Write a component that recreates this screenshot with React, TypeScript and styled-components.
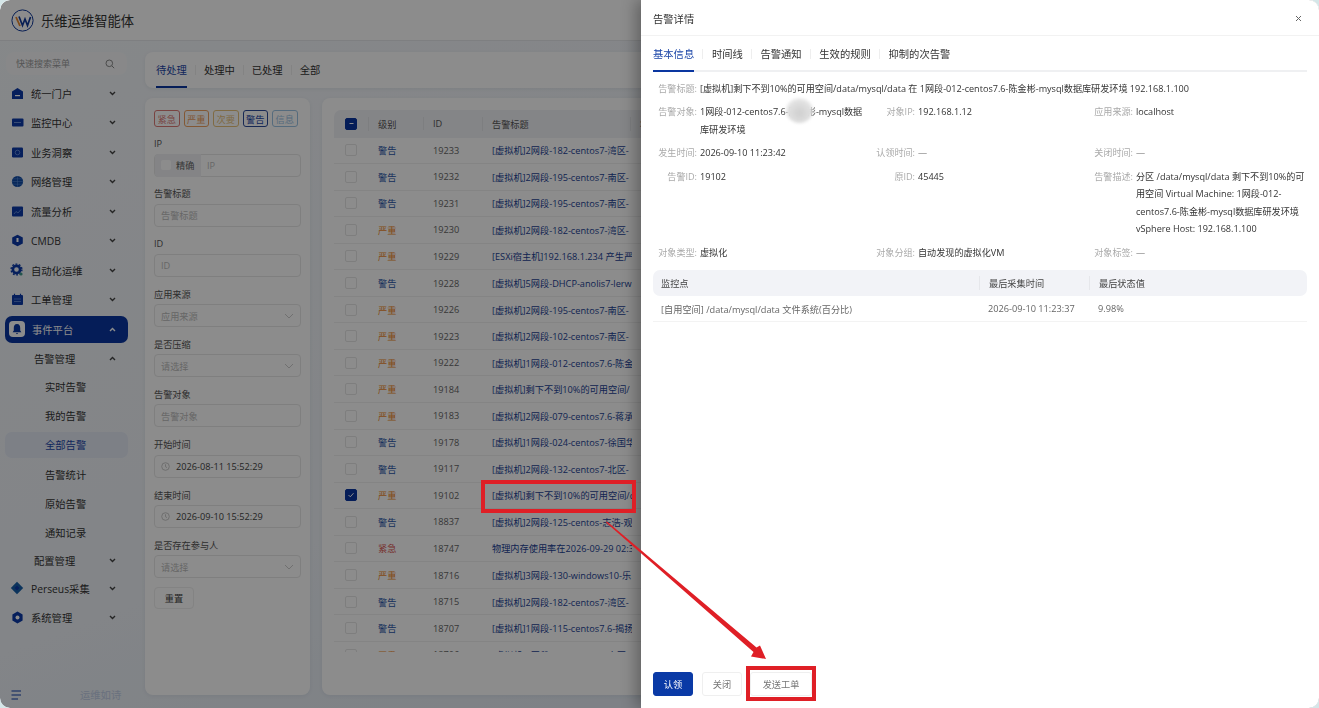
import React from 'react';
import styled, { createGlobalStyle } from 'styled-components';

const GlobalStyle = createGlobalStyle`
  html, body { margin: 0; padding: 0; background: #d5e6e8; overflow: hidden; }
  * { box-sizing: border-box; }
`;

const font = `"Open Sans", "Noto Sans CJK SC", sans-serif`;

const Screen = styled.div`
  position: relative;
  width: 1319px;
  height: 708px;
  overflow: hidden;
  border-radius: 10px;
  font-family: ${font};
  font-size: 10.3px;
  color: #333;
  background: linear-gradient(160deg, #f4f7fa 0%, #eef2f7 55%, #dde6f2 100%);
`;

const Page = styled.div`
  width: 1319px;
  height: 708px;
  display: flex;
  flex-direction: column;
`;

const TopBar = styled.header`
  height: 41px;
  flex: none;
  display: flex;
  align-items: center;
  gap: 7px;
  padding-left: 11px;
  background: #fff;
  border-bottom: 1px solid #e6e8ec;
  font-size: 13.3px;
  color: #333;
`;

const Body = styled.div`
  flex: 1;
  display: flex;
  min-height: 0;
`;

const Sidebar = styled.aside`
  width: 145px;
  flex: none;
  display: flex;
  flex-direction: column;
  padding: 11px 17px 0 5px;
  position: relative;
`;

const MenuSearch = styled.div`
  height: 23px;
  margin: 0 1px 3.5px;
  padding: 0 12px 0 10px;
  display: flex;
  align-items: center;
  justify-content: space-between;
  border-radius: 8px;
  background: #f7f8fa;
  color: #9a9a9a;
  font-size: 9px;
`;

const MenuItem = styled.div<{ $active?: boolean; $level?: number; $selected?: boolean }>`
  height: ${p => (p.$active ? '27px' : p.$selected ? '26px' : p.$level === 1 ? '26px' : p.$level === 2 ? '29.3px' : '29.5px')};
  margin: ${p => (p.$active ? '1px 0 3px' : p.$selected ? '1.65px 0' : '0')};
  flex: none;
  display: flex;
  align-items: center;
  padding-left: ${p => (p.$level === 2 ? '40px' : p.$level === 1 ? '29px' : '5px')};
  padding-right: 12.5px;
  gap: 7px;
  border-radius: 7px;
  font-size: 10.3px;
  color: ${p => (p.$active ? '#fff' : p.$selected ? '#1c46a8' : '#333')};
  background: ${p => (p.$active ? '#0a36a0' : p.$selected ? '#e3e9f5' : 'transparent')};
`;

const MenuLabel = styled.span`
  flex: 1;
  white-space: nowrap;
`;

const MenuIcon = styled.span<{ $active?: boolean }>`
  width: 14px;
  height: 14px;
  flex: none;
  display: flex;
  align-items: center;
  justify-content: center;
  ${p => p.$active && `
    width: 16px;
    height: 16px;
    margin-left: -1px;
    background: #fff;
    border-radius: 4px;
  `}
`;

const SideFoot = styled.div`
  position: absolute;
  left: 11px;
  right: 17px;
  bottom: 6px;
  display: flex;
  align-items: center;
  gap: 58px;
  color: #c0cde6;
  font-size: 10.3px;
`;

const Main = styled.main`
  flex: 1;
  min-width: 0;
  display: flex;
  flex-direction: column;
  padding-top: 11px;
`;

const PageTabs = styled.nav`
  height: 36px;
  flex: none;
  display: flex;
  align-items: stretch;
  padding-left: 11px;
  background: #fff;
  border-radius: 8px 0 0 8px;
  box-shadow: 0 1px 4px rgba(30, 50, 90, 0.07);
`;

const PageTab = styled.div<{ $on?: boolean }>`
  position: relative;
  display: flex;
  align-items: center;
  margin-right: 17px;
  font-size: 10.3px;
  color: ${p => (p.$on ? '#1c46a8' : '#333')};
  border-bottom: 2px solid ${p => (p.$on ? '#0a36a0' : 'transparent')};
  &:not(:last-child)::after {
    content: '';
    position: absolute;
    right: -9px;
    top: 13px;
    height: 10px;
    width: 1px;
    background: #eee;
  }
`;

const Columns = styled.div`
  flex: 1;
  display: flex;
  gap: 12px;
  padding: 10px 0 13px;
  min-height: 0;
`;

const FilterPanel = styled.section`
  width: 165px;
  flex: none;
  padding: 12px 9px;
  background: #fff;
  border-radius: 8px;
  box-shadow: 0 1px 4px rgba(30, 50, 90, 0.07);
`;

const LevelRow = styled.div`
  display: flex;
  gap: 4px;
  margin-bottom: 8px;
`;

const LevelChip = styled.span<{ $color: string; $on?: boolean }>`
  height: 17px;
  width: 25.5px;
  display: flex;
  align-items: center;
  justify-content: center;
  border: 1px solid ${p => p.$color};
  border-radius: 3px;
  font-size: 9.2px;
  color: ${p => (p.$on ? '#1c46a8' : p.$color)};
`;

const FieldLabel = styled.div`
  height: 16.5px;
  margin-top: 1px;
  display: flex;
  align-items: center;
  font-size: 9.2px;
  color: #555;
`;

const FieldBox = styled.div`
  height: 23px;
  margin: 2px 0 8.7px;
  display: flex;
  align-items: center;
  justify-content: space-between;
  padding: 0 6px;
  border: 1px solid #e8e8e8;
  border-radius: 4px;
  background: #fff;
  color: #bbb;
  font-size: 9.2px;
`;

const Addon = styled.div`
  margin: -1px 6px -1px -6px;
  width: 46px;
  height: 23px;
  flex: none;
  display: flex;
  align-items: center;
  gap: 5px;
  padding-left: 6px;
  background: #f0f1f4;
  border-radius: 4px 0 0 4px;
  color: #666;
`;

const AddonCheck = styled.span`
  width: 10px;
  height: 10px;
  background: #fff;
  border-radius: 2px;
`;

const FieldValue = styled.span`
  flex: 1;
  white-space: nowrap;
`;

const TimeValue = styled.span`
  flex: 1;
  margin-left: 6px;
  white-space: nowrap;
  color: #444;
`;

const ResetButton = styled.div`
  width: 40px;
  height: 22px;
  margin-top: 1px;
  display: flex;
  align-items: center;
  justify-content: center;
  border: 1px solid #eee;
  border-radius: 4px;
  color: #444;
  font-size: 9.2px;
`;

const TablePanel = styled.section`
  flex: 1;
  min-width: 0;
  padding: 12px 12px 40px;
  background: #fff;
  border-radius: 8px 0 0 8px;
  box-shadow: 0 1px 4px rgba(30, 50, 90, 0.07);
`;

const TableClip = styled.div`
  height: 542px;
  overflow: hidden;
`;

const HeadRow = styled.div`
  height: 27.5px;
  display: grid;
  grid-template-columns: 34px 55px 59px 148px 1fr;
  align-items: center;
  background: #f1f2f6;
  border-radius: 7px 7px 0 0;
  color: #555;
  font-size: 9.2px;
`;

const HeadCell = styled.div`
  padding-left: 9px;
  border-left: 1px solid #e4e5ea;
  white-space: nowrap;
  &:first-child { border-left: none; padding-left: 11px; }
`;

const DataRow = styled.div`
  height: 26.55px;
  display: grid;
  grid-template-columns: 34px 55px 59px 150px 1fr;
  align-items: center;
  border-bottom: 1px solid #f1f1f1;
  font-size: 9.2px;
`;

const CheckCell = styled.div`
  padding-left: 11px;
  display: flex;
`;

const Check = styled.span<{ $on?: boolean }>`
  width: 12px;
  height: 12px;
  display: flex;
  align-items: center;
  justify-content: center;
  border-radius: 2px;
  border: 1px solid ${p => (p.$on ? '#0a36a0' : '#e6e6e6')};
  background: ${p => (p.$on ? '#0a36a0' : '#fff')};
`;

const Level = styled.div<{ $color: string }>`
  padding-left: 10px;
  color: ${p => p.$color};
  white-space: nowrap;
`;

const IdCell = styled.div`
  padding-left: 10px;
  color: #666;
`;

const TitleCell = styled.div`
  padding-left: 10px;
  color: #1c3f94;
  white-space: nowrap;
  overflow: hidden;
`;

const Mask = styled.div`
  position: absolute;
  inset: 0;
  background: rgba(0, 0, 0, 0.45);
  backdrop-filter: blur(0.6px);
`;

const Drawer = styled.aside`
  position: absolute;
  top: 0;
  right: 0;
  bottom: 0;
  width: 678px;
  display: flex;
  flex-direction: column;
  background: #fff;
  box-shadow: -5px 0 14px rgba(0, 0, 0, 0.3);
`;

const DrawerHead = styled.div`
  height: 36px;
  flex: none;
  display: flex;
  align-items: center;
  justify-content: space-between;
  padding: 2px 17px 0 12px;
  border-bottom: 1px solid #f2f2f2;
  font-size: 10.3px;
  color: #333;
`;

const DrawerBody = styled.div`
  flex: 1;
  min-height: 0;
  padding: 0 12px;
`;

const DrawerTabs = styled.div`
  height: 36px;
  display: flex;
  align-items: stretch;
  border-bottom: 2px solid #eff0f2;
`;

const DrawerTab = styled.div<{ $on?: boolean }>`
  position: relative;
  display: flex;
  align-items: center;
  margin-right: 17.7px;
  color: ${p => (p.$on ? '#1c46a8' : '#333')};
  font-size: 10.3px;
  &:not(:last-child)::before {
    content: '';
    position: absolute;
    right: -9px;
    top: 13px;
    height: 10px;
    width: 1px;
    background: #eee;
  }
  ${p => p.$on && `
    &::after {
      content: '';
      position: absolute;
      left: 0;
      right: 0;
      bottom: -2px;
      height: 2px;
      background: #0a36a0;
    }
  `}
`;

const InfoGrid = styled.div`
  display: grid;
  grid-template-columns: repeat(3, 218px);
  row-gap: 6px;
  padding-top: 7.5px;
`;

const InfoItem = styled.div<{ $wide?: boolean }>`
  display: flex;
  line-height: 17.5px;
  ${p => p.$wide && 'grid-column: 1 / -1;'}
`;

const InfoLabel = styled.span`
  width: 44px;
  flex: none;
  margin-right: 3px;
  text-align: right;
  white-space: nowrap;
  color: #aaa;
  font-size: 9.1px;
`;

const InfoValue = styled.span`
  width: 170px;
  color: #333;
  font-size: 9.1px;
`;

const WideValue = styled(InfoValue)`
  width: auto;
  flex: 1;
  white-space: nowrap;
`;

const MuteValue = styled(InfoValue)`
  color: #888;
`;

const Smudge = styled.span`
  position: absolute;
  left: 786px;
  top: 98px;
  width: 27px;
  height: 25px;
  border-radius: 50%;
  background: radial-gradient(circle at 50% 60%, #cfcfcf 0%, #e0e0e0 55%, rgba(255, 255, 255, 0.6) 100%);
  filter: blur(1.5px);
`;

const PointHead = styled.div`
  height: 26px;
  margin-top: 8.5px;
  display: grid;
  grid-template-columns: 326px 110px 1fr;
  align-items: center;
  background: #f2f3f7;
  border-radius: 7px;
  color: #444;
  font-size: 9.2px;
`;

const PointCell = styled.div`
  padding-left: 9px;
  border-left: 1px solid #e6e7eb;
  &:first-child { border-left: none; padding-left: 8px; }
`;

const PointRow = styled.div`
  height: 26px;
  padding-top: 1px;
  display: grid;
  grid-template-columns: 326px 110px 1fr;
  align-items: center;
  border-bottom: 1px solid #f3f3f3;
  color: #666;
  font-size: 9.2px;
`;

const PointData = styled.div`
  padding-left: 9px;
  &:first-child { padding-left: 8px; }
`;

const DrawerFoot = styled.div`
  height: 48px;
  flex: none;
  display: flex;
  align-items: flex-start;
  gap: 9px;
  padding: 12px 12px 0;
`;

const FootButton = styled.button<{ $primary?: boolean; $plain?: boolean }>`
  height: 24px;
  width: ${p => (p.$plain ? '62px' : '40px')};
  margin-left: ${p => (p.$plain ? '-1px' : '0')};
  padding: 0;
  font-family: inherit;
  font-size: 9.2px;
  border-radius: 3px;
  color: ${p => (p.$primary ? '#fff' : '#777')};
  background: ${p => (p.$primary ? '#0a3aa6' : '#fff')};
  border: 1px solid ${p => (p.$primary ? '#0a3aa6' : '#efefef')};
`;

const RedBox = styled.div<{ $x: number; $y: number; $w: number; $h: number }>`
  position: absolute;
  left: ${p => p.$x}px;
  top: ${p => p.$y}px;
  width: ${p => p.$w}px;
  height: ${p => p.$h}px;
  border: 4px solid #df1f26;
`;

const ArrowLayer = styled.svg`
  position: absolute;
  left: 0;
  top: 0;
  pointer-events: none;
`;

const Logo = () => (
  <svg width="23" height="23" viewBox="0 0 23 23">
    <circle cx="11.5" cy="11.5" r="10.6" fill="#fff" stroke="#123a9a" strokeWidth="1" />
    <path d="M5 8 L9 17" stroke="#e8862c" strokeWidth="1.8" fill="none" />
    <path d="M8 7.5 L11.5 16.5 L14 10 L16.5 16.5 L19.5 8" stroke="#123a9a" strokeWidth="1.7" fill="none" />
  </svg>
);

const Chevron = ({ up, color = '#444' }: { up?: boolean; color?: string }) => (
  <svg width="7" height="5" viewBox="0 0 7 5" style={{ flex: 'none' }}>
    <path d={up ? 'M1 4 L3.5 1.5 L6 4' : 'M1 1 L3.5 3.5 L6 1'} stroke={color} strokeWidth="1.4" fill="none" />
  </svg>
);

const SmallChevron = () => (
  <svg width="10" height="6" viewBox="0 0 10 6">
    <path d="M1 1 L5 5 L9 1" stroke="#ccc" strokeWidth="1" fill="none" />
  </svg>
);

const SearchIcon = () => (
  <svg width="10" height="10" viewBox="0 0 10 10">
    <circle cx="4.3" cy="4.3" r="3.3" stroke="#888" strokeWidth="1" fill="none" />
    <path d="M6.8 6.8 L9.2 9.2" stroke="#888" strokeWidth="1" />
  </svg>
);

const ClockIcon = () => (
  <svg width="9" height="9" viewBox="0 0 9 9" style={{ flex: 'none' }}>
    <circle cx="4.5" cy="4.5" r="3.8" stroke="#bbb" strokeWidth="0.8" fill="none" />
    <path d="M4.5 2.3 V4.7 L6 5.6" stroke="#bbb" strokeWidth="0.8" fill="none" />
  </svg>
);

const navy = '#0c3aa8';

const icons: Record<string, React.ReactNode> = {
  home: <svg width="13" height="13" viewBox="0 0 13 13"><path d="M6.5 1 L12 4.5 V12 H1 V4.5 Z" fill={navy} /><rect x="4" y="8" width="5" height="1.2" fill="#fff" /></svg>,
  screen: <svg width="13" height="13" viewBox="0 0 13 13"><rect x="1" y="2.5" width="11.5" height="8" rx="1" fill={navy} /><path d="M3 6.5 H10" stroke="#7fa0e0" strokeWidth="0.8" /></svg>,
  insight: <svg width="13" height="13" viewBox="0 0 13 13"><rect x="1" y="1.5" width="11" height="10" rx="1.2" fill={navy} /><circle cx="6.5" cy="6.5" r="2.3" fill="none" stroke="#6f94dc" strokeWidth="0.8" /></svg>,
  globe: <svg width="13" height="13" viewBox="0 0 13 13"><circle cx="6.5" cy="6.5" r="5.6" fill="#0f4aa5" /><path d="M1 6.5 H12 M6.5 1 V12 M2 3.8 H11 M2 9.2 H11" stroke="#5e8fd8" strokeWidth="0.5" /></svg>,
  flow: <svg width="13" height="13" viewBox="0 0 13 13"><rect x="1" y="1.5" width="11" height="10" rx="1" fill={navy} /><path d="M3 9 L5 6.5 L7 8 L10 4.5" stroke="#6f94dc" strokeWidth="0.8" fill="none" /></svg>,
  box: <svg width="13" height="13" viewBox="0 0 13 13"><path d="M6.5 0.8 L11.8 3.6 V9.4 L6.5 12.2 L1.2 9.4 V3.6 Z" fill={navy} /><rect x="5.5" y="4" width="2" height="4" fill="#fff" /></svg>,
  gear: <svg width="14" height="14" viewBox="0 0 14 14"><circle cx="6.5" cy="6.5" r="3.6" fill="none" stroke={navy} strokeWidth="2.6" /><circle cx="6.5" cy="6.5" r="5.4" fill="none" stroke={navy} strokeWidth="1.4" strokeDasharray="1.8 1.6" /><circle cx="11" cy="11" r="1.6" fill="#3e9a8c" /></svg>,
  ticket: <svg width="13" height="13" viewBox="0 0 13 13"><rect x="1" y="2" width="11" height="10" rx="1" fill={navy} /><path d="M3.5 0.8 V3 M9.5 0.8 V3" stroke={navy} strokeWidth="1.2" /><path d="M3 6 H10 M3 8.5 H10" stroke="#6f94dc" strokeWidth="0.7" /></svg>,
  bell: <svg width="12" height="12" viewBox="0 0 12 12"><path d="M6 1 C3.6 1 2.8 3 2.8 5 V7.6 L1.6 9.2 H10.4 L9.2 7.6 V5 C9.2 3 8.4 1 6 1 Z M4.8 10 H7.2 L6 11.2 Z" fill="#0a36a0" /></svg>,
  diamond: <svg width="14" height="14" viewBox="0 0 14 14"><path d="M7 0.8 L13.2 7 L7 13.2 L0.8 7 Z" fill="#155ea8" /><path d="M7 4.5 L9.5 7 L7 9.5 L4.5 7 Z" fill="#0c3aa8" /></svg>,
  cog: <svg width="13" height="13" viewBox="0 0 13 13"><path d="M6.5 0.6 L11.6 3.5 V9.5 L6.5 12.4 L1.4 9.5 V3.5 Z" fill={navy} /><circle cx="6.5" cy="6.5" r="2" fill="#fff" /></svg>,
};

const menu = [
  ['home', '统一门户'], ['screen', '监控中心'], ['insight', '业务洞察'], ['globe', '网络管理'],
  ['flow', '流量分析'], ['box', 'CMDB'], ['gear', '自动化运维'], ['ticket', '工单管理'],
];

const levels: Record<string, string> = { 紧急: '#d9534f', 严重: '#ee8a2c', 警告: '#2a55a8' };

const rows: [string, string, string][] = [
  ['警告', '19233', '[虚拟机]2网段-182-centos7-湾区-'],
  ['警告', '19232', '[虚拟机]2网段-195-centos7-南区-'],
  ['警告', '19231', '[虚拟机]2网段-195-centos7-南区-'],
  ['严重', '19230', '[虚拟机]2网段-182-centos7-湾区-'],
  ['严重', '19229', '[ESXi宿主机]192.168.1.234 产生严'],
  ['警告', '19228', '[虚拟机]5网段-DHCP-anolis7-lerw'],
  ['严重', '19226', '[虚拟机]2网段-195-centos7-南区-'],
  ['严重', '19223', '[虚拟机]2网段-102-centos7-南区-'],
  ['严重', '19222', '[虚拟机]1网段-012-centos7.6-陈金'],
  ['严重', '19184', '[虚拟机]剩下不到10%的可用空间/'],
  ['严重', '19183', '[虚拟机]2网段-079-centos7.6-蒋承'],
  ['警告', '19178', '[虚拟机]1网段-024-centos7-徐国华'],
  ['警告', '19117', '[虚拟机]2网段-132-centos7-北区-'],
  ['严重', '19102', '[虚拟机]剩下不到10%的可用空间/d'],
  ['警告', '18837', '[虚拟机]2网段-125-centos-志浩-观'],
  ['紧急', '18747', '物理内存使用率在2026-09-29 02:3'],
  ['严重', '18716', '[虚拟机]3网段-130-windows10-乐'],
  ['警告', '18715', '[虚拟机]2网段-182-centos7-湾区-'],
  ['警告', '18707', '[虚拟机]1网段-115-centos7.6-揭扬'],
  ['严重', '18706', '[虚拟机]1网段-104-centos7-南区-'],
];

function Filters() {
  return (
    <FilterPanel>
      <LevelRow>
        <LevelChip $color="#dd7a76">紧急</LevelChip>
        <LevelChip $color="#eea060">严重</LevelChip>
        <LevelChip $color="#e8c27a">次要</LevelChip>
        <LevelChip $color="#2a4a9a" $on>警告</LevelChip>
        <LevelChip $color="#9cc4e4">信息</LevelChip>
      </LevelRow>
      <FieldLabel>IP</FieldLabel>
      <FieldBox>
        <Addon><AddonCheck />精确</Addon>
        <FieldValue>IP</FieldValue>
      </FieldBox>
      <FieldLabel>告警标题</FieldLabel>
      <FieldBox>告警标题</FieldBox>
      <FieldLabel>ID</FieldLabel>
      <FieldBox>ID</FieldBox>
      <FieldLabel>应用来源</FieldLabel>
      <FieldBox>应用来源<SmallChevron /></FieldBox>
      <FieldLabel>是否压缩</FieldLabel>
      <FieldBox>请选择<SmallChevron /></FieldBox>
      <FieldLabel>告警对象</FieldLabel>
      <FieldBox>告警对象</FieldBox>
      <FieldLabel>开始时间</FieldLabel>
      <FieldBox><ClockIcon /><TimeValue>2026-08-11 15:52:29</TimeValue></FieldBox>
      <FieldLabel>结束时间</FieldLabel>
      <FieldBox><ClockIcon /><TimeValue>2026-09-10 15:52:29</TimeValue></FieldBox>
      <FieldLabel>是否存在参与人</FieldLabel>
      <FieldBox>请选择<SmallChevron /></FieldBox>
      <ResetButton>重置</ResetButton>
    </FilterPanel>
  );
}

function AlarmTable() {
  return (
    <TablePanel>
      <TableClip>
        <HeadRow>
          <CheckCell>
            <Check $on>
              <svg width="7" height="7" viewBox="0 0 7 7"><path d="M1.5 3.5 H5.5" stroke="#fff" strokeWidth="1" /></svg>
            </Check>
          </CheckCell>
          <HeadCell>级别</HeadCell>
          <HeadCell>ID</HeadCell>
          <HeadCell>告警标题</HeadCell>
          <HeadCell>状态</HeadCell>
        </HeadRow>
        {rows.map(([level, id, title]) => (
          <DataRow key={id}>
            <CheckCell>
              <Check $on={id === '19102'}>
                {id === '19102' && (
                  <svg width="8" height="8" viewBox="0 0 8 8"><path d="M1.5 4 L3.3 5.8 L6.5 2.2" stroke="#fff" strokeWidth="1" fill="none" /></svg>
                )}
              </Check>
            </CheckCell>
            <Level $color={levels[level]}>{level}</Level>
            <IdCell>{id}</IdCell>
            <TitleCell>{title}</TitleCell>
          </DataRow>
        ))}
      </TableClip>
    </TablePanel>
  );
}

function BackPage() {
  return (
    <Page>
      <TopBar><Logo />乐维运维智能体</TopBar>
      <Body>
        <Sidebar>
          <MenuSearch>快速搜索菜单<SearchIcon /></MenuSearch>
          {menu.map(([icon, label]) => (
            <MenuItem key={label}>
              <MenuIcon>{icons[icon]}</MenuIcon>
              <MenuLabel>{label}</MenuLabel>
              <Chevron />
            </MenuItem>
          ))}
          <MenuItem $active>
            <MenuIcon $active>{icons.bell}</MenuIcon>
            <MenuLabel>事件平台</MenuLabel>
            <Chevron up color="#fff" />
          </MenuItem>
          <MenuItem $level={1}><MenuLabel>告警管理</MenuLabel><Chevron up /></MenuItem>
          <MenuItem $level={2}><MenuLabel>实时告警</MenuLabel></MenuItem>
          <MenuItem $level={2}><MenuLabel>我的告警</MenuLabel></MenuItem>
          <MenuItem $level={2} $selected><MenuLabel>全部告警</MenuLabel></MenuItem>
          <MenuItem $level={2}><MenuLabel>告警统计</MenuLabel></MenuItem>
          <MenuItem $level={2}><MenuLabel>原始告警</MenuLabel></MenuItem>
          <MenuItem $level={2}><MenuLabel>通知记录</MenuLabel></MenuItem>
          <MenuItem $level={1}><MenuLabel>配置管理</MenuLabel><Chevron /></MenuItem>
          <MenuItem>
            <MenuIcon>{icons.diamond}</MenuIcon>
            <MenuLabel>Perseus采集</MenuLabel>
            <Chevron />
          </MenuItem>
          <MenuItem>
            <MenuIcon>{icons.cog}</MenuIcon>
            <MenuLabel>系统管理</MenuLabel>
            <Chevron />
          </MenuItem>
          <SideFoot>
            <svg width="11" height="10" viewBox="0 0 11 10">
              <path d="M0.5 1 H10 M0.5 5 H10 M0.5 9 H7" stroke="#0c3aa8" strokeWidth="1.1" />
            </svg>
            运维如诗
          </SideFoot>
        </Sidebar>
        <Main>
          <PageTabs>
            <PageTab $on>待处理</PageTab>
            <PageTab>处理中</PageTab>
            <PageTab>已处理</PageTab>
            <PageTab>全部</PageTab>
          </PageTabs>
          <Columns>
            <Filters />
            <AlarmTable />
          </Columns>
        </Main>
      </Body>
    </Page>
  );
}

function DetailDrawer() {
  return (
    <Drawer>
      <DrawerHead>
        告警详情
        <svg width="7" height="7" viewBox="0 0 7 7">
          <path d="M1 1 L6 6 M6 1 L1 6" stroke="#666" strokeWidth="1" />
        </svg>
      </DrawerHead>
      <DrawerBody>
        <DrawerTabs>
          <DrawerTab $on>基本信息</DrawerTab>
          <DrawerTab>时间线</DrawerTab>
          <DrawerTab>告警通知</DrawerTab>
          <DrawerTab>生效的规则</DrawerTab>
          <DrawerTab>抑制的次告警</DrawerTab>
        </DrawerTabs>
        <InfoGrid>
          <InfoItem $wide>
            <InfoLabel>告警标题:</InfoLabel>
            <WideValue>[虚拟机]剩下不到10%的可用空间/data/mysql/data 在 1网段-012-centos7.6-陈金彬-mysql数据库研发环境 192.168.1.100</WideValue>
          </InfoItem>
          <InfoItem>
            <InfoLabel>告警对象:</InfoLabel>
            <InfoValue>1网段-012-centos7.6-陈金彬-mysql数据库研发环境</InfoValue>
          </InfoItem>
          <InfoItem><InfoLabel>对象IP:</InfoLabel><InfoValue>192.168.1.12</InfoValue></InfoItem>
          <InfoItem><InfoLabel>应用来源:</InfoLabel><InfoValue>localhost</InfoValue></InfoItem>
          <InfoItem><InfoLabel>发生时间:</InfoLabel><InfoValue>2026-09-10 11:23:42</InfoValue></InfoItem>
          <InfoItem><InfoLabel>认领时间:</InfoLabel><MuteValue>—</MuteValue></InfoItem>
          <InfoItem><InfoLabel>关闭时间:</InfoLabel><MuteValue>—</MuteValue></InfoItem>
          <InfoItem><InfoLabel>告警ID:</InfoLabel><InfoValue>19102</InfoValue></InfoItem>
          <InfoItem><InfoLabel>原ID:</InfoLabel><InfoValue>45445</InfoValue></InfoItem>
          <InfoItem>
            <InfoLabel>告警描述:</InfoLabel>
            <InfoValue>分区 /data/mysql/data 剩下不到10%的可用空间 Virtual Machine: 1网段-012-centos7.6-陈金彬-mysql数据库研发环境 vSphere Host: 192.168.1.100</InfoValue>
          </InfoItem>
          <InfoItem><InfoLabel>对象类型:</InfoLabel><InfoValue>虚拟化</InfoValue></InfoItem>
          <InfoItem><InfoLabel>对象分组:</InfoLabel><InfoValue>自动发现的虚拟化VM</InfoValue></InfoItem>
          <InfoItem><InfoLabel>对象标签:</InfoLabel><MuteValue>—</MuteValue></InfoItem>
        </InfoGrid>
        <PointHead>
          <PointCell>监控点</PointCell>
          <PointCell>最后采集时间</PointCell>
          <PointCell>最后状态值</PointCell>
        </PointHead>
        <PointRow>
          <PointData>[自用空间] /data/mysql/data 文件系统(百分比)</PointData>
          <PointData>2026-09-10 11:23:37</PointData>
          <PointData>9.98%</PointData>
        </PointRow>
      </DrawerBody>
      <DrawerFoot>
        <FootButton $primary>认领</FootButton>
        <FootButton>关闭</FootButton>
        <FootButton $plain>发送工单</FootButton>
      </DrawerFoot>
    </Drawer>
  );
}

export default function App() {
  return (
    <>
      <GlobalStyle />
      <Screen>
        <BackPage />
        <Mask />
        <DetailDrawer />
        <Smudge />
        <RedBox $x={481} $y={480} $w={155} $h={33} />
        <RedBox $x={746} $y={666} $w={70} $h={35} />
        <ArrowLayer width="1319" height="708" viewBox="0 0 1319 708">
          <path d="M607 521.5 L756.5 647.5 L760 645.5 L766 659 L751 656.5 L753.5 652 L606 522.5 Z" fill="#df1f26" />
        </ArrowLayer>
      </Screen>
    </>
  );
}
